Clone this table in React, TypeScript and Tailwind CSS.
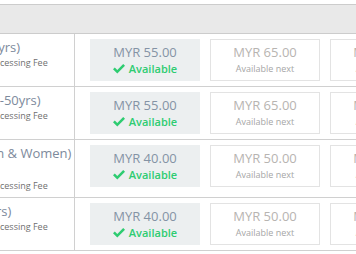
import React from 'react';

type Slot = { price: string; available: boolean };

interface Row {
  title: string;
  extra?: string;
  fee: string;
  slots: Slot[];
}

const rows: Row[] = [
  {
    title: 'Adult (13-59yrs)',
    fee: 'Incl. MYR 5.00 Processing Fee',
    slots: [
      { price: 'MYR 55.00', available: true },
      { price: 'MYR 65.00', available: false },
      { price: 'MYR 65.00', available: false },
    ],
  },
  {
    title: 'Disabled (18-50yrs)',
    fee: 'Incl. MYR 5.00 Processing Fee',
    slots: [
      { price: 'MYR 55.00', available: true },
      { price: 'MYR 65.00', available: false },
      { price: 'MYR 65.00', available: false },
    ],
  },
  {
    title: 'Seniors (Men & Women)',
    extra: 'Malaysian',
    fee: 'Incl. MYR 5.00 Processing Fee',
    slots: [
      { price: 'MYR 40.00', available: true },
      { price: 'MYR 50.00', available: false },
      { price: 'MYR 50.00', available: false },
    ],
  },
  {
    title: 'Child (3-12yrs)',
    fee: 'Incl. MYR 5.00 Processing Fee',
    slots: [
      { price: 'MYR 40.00', available: true },
      { price: 'MYR 50.00', available: false },
      { price: 'MYR 50.00', available: false },
    ],
  },
];

const CheckIcon = () => (
  <svg width="12" height="10" viewBox="0 0 12 10" className="shrink-0">
    <polygon points="0,5.2 1.8,3.4 4.3,5.9 10.2,0 12,1.8 4.3,9.5" fill="#2ecc71" />
  </svg>
);

const PriceBox = ({ slot }: { slot: Slot }) =>
  slot.available ? (
    <div className="w-[110px] h-[42px] shrink-0 bg-[#eceff0] flex flex-col items-center pt-[4px]">
      <span className="text-[13px] leading-[18px] text-[#8493a5]">{slot.price}</span>
      <span className="flex items-center gap-[4px] text-[11px] leading-[16px] font-semibold text-[#2ecc71]">
        <CheckIcon /> Available
      </span>
    </div>
  ) : (
    <div className="w-[110px] h-[42px] shrink-0 bg-white border border-[#e3e3e3] flex flex-col items-center pt-[3px]">
      <span className="text-[13px] leading-[18px] text-[#b7b4b1]">{slot.price}</span>
      <span className="text-[9px] leading-[16px] text-[#a6a6a6]">Available next</span>
    </div>
  );

export default function App() {
  return (
    <div className="w-[356px] h-[254px] overflow-hidden bg-white pt-[4px] font-['Open_Sans',sans-serif]">
      <div className="w-[640px] ml-[-83px]">
        <div className="h-[30px] bg-[#e9e9e9] border-y border-[#cccccc]"></div>
        {rows.map((row, i) => (
          <div key={i} className="grid grid-cols-[158px_1fr] border-b border-[#d0d0d0]">
            <div className="border-r border-[#d0d0d0] pl-[8px] pt-[5px] pb-[4px]">
              <p className="text-[13px] leading-[17px] text-[#7d8a9c] whitespace-nowrap">{row.title}</p>
              {row.extra && (
                <p className="text-[13px] leading-[17px] text-[#7d8a9c] whitespace-nowrap">{row.extra}</p>
              )}
              <p className="text-[9px] leading-[14px] text-[#6f6f6f] whitespace-nowrap">{row.fee}</p>
            </div>
            <div className="pl-[15px] py-[5px] flex items-start gap-[10px]">
              {row.slots.map((slot, j) => (
                <PriceBox key={j} slot={slot} />
              ))}
            </div>
          </div>
        ))}
      </div>
    </div>
  );
}
